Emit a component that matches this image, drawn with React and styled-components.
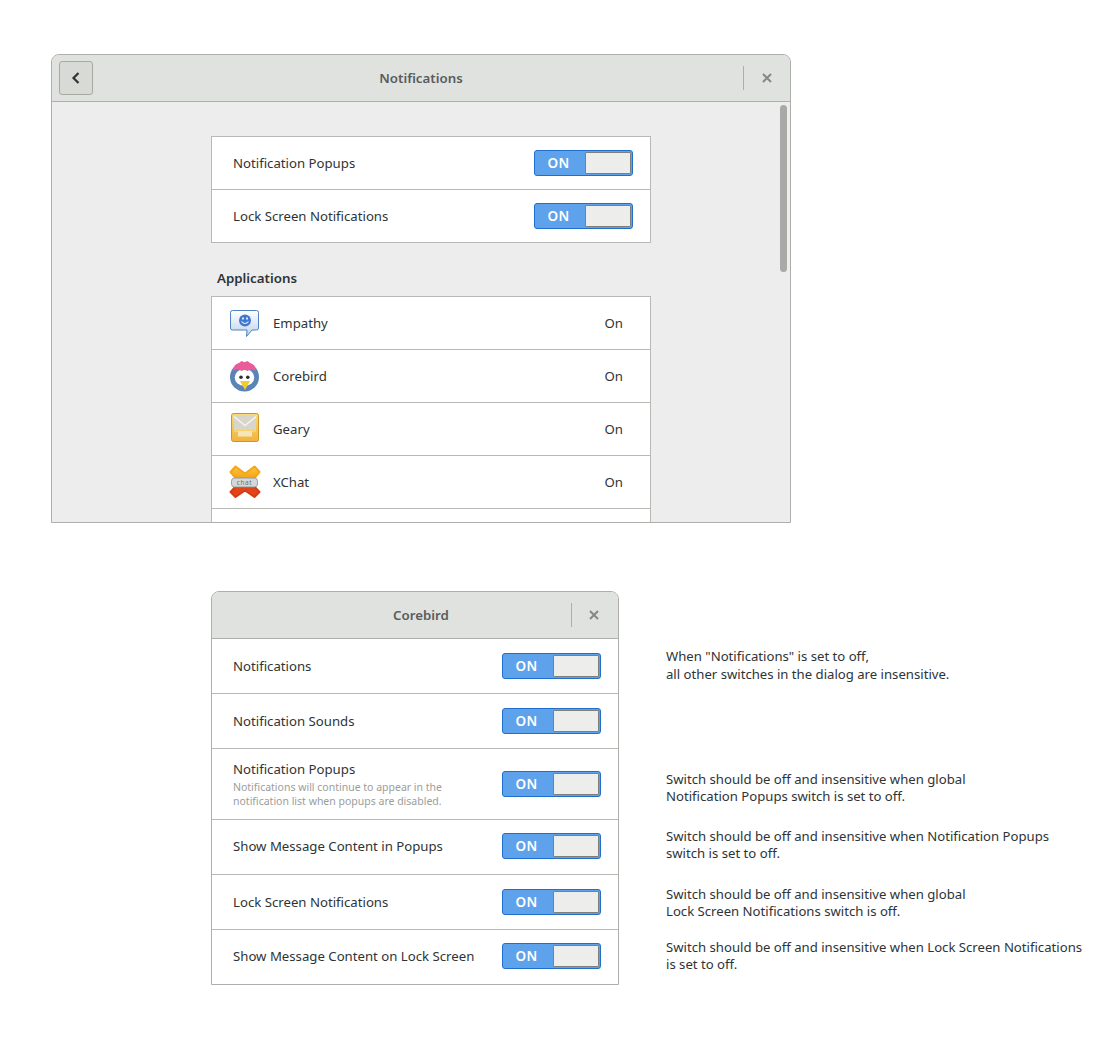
import styled, { createGlobalStyle } from "styled-components";

const GlobalStyle = createGlobalStyle`
  html, body {
    margin: 0;
    background: #fff;
    font-family: "Noto Sans", "Open Sans", sans-serif;
    color: #2e3436;
  }
`;

const Page = styled.div`
  width: 1120px;
  height: 1060px;
  box-sizing: border-box;
  padding: 54px 0 0 51px;
  display: flex;
  flex-direction: column;
  gap: 68px;
`;

const Window = styled.section`
  position: relative;
  box-sizing: border-box;
  width: 740px;
  height: 469px;
  display: flex;
  flex-direction: column;
  border: 1px solid #aeaeaa;
  border-radius: 8px 8px 0 0;
  overflow: hidden;
  background: #ededed;
`;

const Header = styled.header`
  position: relative;
  flex: none;
  box-sizing: border-box;
  height: 47px;
  display: flex;
  align-items: center;
  padding: 0 7px;
  background: #e0e2df;
  border-bottom: 1px solid #aeaeaa;
`;

const Title = styled.h1`
  position: absolute;
  left: ${(p) => p.$shift || 0}px;
  right: 0;
  margin: 0;
  text-align: center;
  font-size: 13.3px;
  font-weight: 600;
  color: #585c5c;
`;

const BackButton = styled.button`
  position: relative;
  width: 34px;
  height: 34px;
  padding: 0;
  display: flex;
  align-items: center;
  justify-content: center;
  background: #d8dad5;
  border: 1px solid #a7a9a3;
  border-radius: 3px;
`;

const HeaderEnd = styled.div`
  position: relative;
  margin-left: auto;
  display: flex;
  align-items: center;
  height: 24px;
  padding-left: ${(p) => p.$left}px;
  padding-right: ${(p) => p.$right}px;
  border-left: 1px solid #aeaeaa;
`;

const Close = () => (
  <svg width="10" height="10" viewBox="0 0 10 10">
    <path d="M1 1 L9 9 M9 1 L1 9" stroke="#858784" strokeWidth="2" fill="none" />
  </svg>
);

const Body = styled.div`
  flex: 1;
  min-height: 0;
  overflow: hidden;
  padding: 34px 0 0 159px;
`;

const Scrollbar = styled.div`
  position: absolute;
  top: 50px;
  right: 3px;
  width: 7px;
  height: 167px;
  border-radius: 4px;
  background: #a9aaa8;
`;

const List = styled.div`
  box-sizing: border-box;
  width: 440px;
  background: #fff;
  border: 1px solid #b8b8b4;
`;

const Row = styled.div`
  box-sizing: border-box;
  height: 53px;
  display: flex;
  align-items: center;
  padding: 0 17px 0 21px;
  border-top: 1px solid #b8b8b4;
  font-size: 13.2px;
  &:first-child {
    height: 52px;
    border-top: 0;
  }
`;

const AppRow = styled(Row)`
  padding: 0 27px 0 16px;
  gap: 12px;
`;

const AppIcon = styled.svg`
  flex: none;
  width: 33px;
  height: 36px;
`;

const Status = styled.span`
  margin-left: auto;
`;

const SectionTitle = styled.h2`
  margin: 25px 0 8px 6px;
  font-size: 13.3px;
  line-height: 20px;
  font-weight: 600;
  color: #2e3436;
`;

const SwitchTrack = styled.div`
  flex: none;
  margin-left: auto;
  box-sizing: border-box;
  width: 99px;
  height: 26px;
  display: flex;
  align-items: stretch;
  padding: 1px;
  background: #5fa2ec;
  border: 1px solid #1f6fcf;
  border-radius: 3px;
`;

const SwitchLabel = styled.span`
  flex: 1;
  display: flex;
  align-items: center;
  justify-content: center;
  padding-right: 4px;
  color: #fff;
  font-size: 13.5px;
  font-weight: 600;
  letter-spacing: 0.4px;
`;

const SwitchHandle = styled.span`
  box-sizing: border-box;
  width: 46px;
  background: #ededeb;
  border: 1px solid #7f7f7c;
  border-radius: 1px;
`;

const Switch = () => (
  <SwitchTrack>
    <SwitchLabel>ON</SwitchLabel>
    <SwitchHandle />
  </SwitchTrack>
);

const Lower = styled.div`
  display: flex;
  margin-left: 160px;
`;

const Dialog = styled.section`
  box-sizing: border-box;
  flex: none;
  width: 408px;
  height: 394px;
  border: 1px solid #aeaeaa;
  border-radius: 8px 8px 0 0;
  overflow: hidden;
  background: #fff;
`;

const DialogRow = styled.div`
  box-sizing: border-box;
  height: ${(p) => p.$height}px;
  display: flex;
  align-items: center;
  padding: 0 17px ${(p) => p.$lift || 0}px 21px;
  border-top: ${(p) => (p.$first ? "0" : "1px solid #b8b8b4")};
  font-size: 13.2px;
`;

const RowText = styled.div`
  display: flex;
  flex-direction: column;
`;

const Hint = styled.span`
  margin-top: 2px;
  font-size: 10.5px;
  line-height: 14px;
  color: #9b9d9b;
`;

const Notes = styled.div`
  margin-left: 47px;
  padding-top: 56px;
  display: flex;
  flex-direction: column;
`;

const Note = styled.p`
  margin: ${(p) => p.$top}px 0 0;
  font-size: 13.15px;
  line-height: ${(p) => p.$leading}px;
  color: #2e3436;
  white-space: pre-line;
`;

const BackIcon = () => (
  <svg width="10" height="14" viewBox="0 0 10 14">
    <path d="M7.5 2 L2.5 7 L7.5 12" stroke="#2e3436" strokeWidth="2.2" fill="none" />
  </svg>
);

const EmpathyIcon = () => (
  <AppIcon viewBox="0 0 33 36">
    <defs>
      <linearGradient id="emp" x1="0" y1="0" x2="0" y2="1">
        <stop offset="0" stopColor="#ffffff" />
        <stop offset="1" stopColor="#bfd2ea" />
      </linearGradient>
    </defs>
    <path d="M4.5 5.5 H28.5 Q30.5 5.5 30.5 7.5 V23 Q30.5 25 28.5 25 H24 L18.5 31.5 L19 25 H4.5 Q2.5 25 2.5 23 V7.5 Q2.5 5.5 4.5 5.5 Z" fill="url(#emp)" stroke="#4f83c1" strokeWidth="1" />
    <circle cx="17" cy="15.5" r="6" fill="#3f78cd" />
    <ellipse cx="15" cy="13.5" rx="0.9" ry="1.3" fill="#e8f0fb" />
    <ellipse cx="19" cy="13.5" rx="0.9" ry="1.3" fill="#e8f0fb" />
    <path d="M13.5 16.5 Q17 20.5 20.5 16.5" stroke="#e8f0fb" strokeWidth="1.1" fill="none" />
  </AppIcon>
);

const CorebirdIcon = () => (
  <AppIcon viewBox="0 0 33 36">
    <circle cx="16.5" cy="19" r="14.5" fill="#5a84b5" />
    <ellipse cx="16.5" cy="19.5" rx="9.8" ry="8.5" fill="#fff" />
    <path d="M5 13 Q5.5 6 11 5 L13.5 3 L16.5 4.2 L19.5 3 L22 5 Q27.5 6 28 13 Q23 10 19.5 13 Q16.5 11 13.5 13 Q10 10 5 13 Z" fill="#ea5c97" />
    <circle cx="13" cy="19.3" r="1.8" fill="#2b3036" />
    <circle cx="19.8" cy="19.3" r="1.8" fill="#2b3036" />
    <path d="M12 23 H22 L17 32 Z" fill="#f2cb2f" />
  </AppIcon>
);

const GearyIcon = () => (
  <AppIcon viewBox="0 0 33 36">
    <defs>
      <linearGradient id="gea" x1="0" y1="0" x2="0" y2="1">
        <stop offset="0" stopColor="#f7dc7a" />
        <stop offset="1" stopColor="#f2b33c" />
      </linearGradient>
    </defs>
    <rect x="3.5" y="2.5" width="27" height="28" rx="2" fill="url(#gea)" stroke="#cf9426" />
    <rect x="6" y="5" width="22" height="15" fill="#d8d6cb" />
    <path d="M6 5.5 L17 14.5 L28 5.5" stroke="#f5f4ee" strokeWidth="1.6" fill="none" />
    <path d="M6 19 H28 V21 H6 Z" fill="#f8d26b" />
    <rect x="10" y="20" width="14" height="5.5" fill="#f5e6b8" />
  </AppIcon>
);

const XChatIcon = () => (
  <AppIcon viewBox="0 0 33 36">
    <defs>
      <linearGradient id="xtop" x1="0" y1="0" x2="0" y2="1">
        <stop offset="0" stopColor="#fcc53a" />
        <stop offset="1" stopColor="#f39a12" />
      </linearGradient>
    </defs>
    <path d="M2.5 8 L7.5 2.5 L17 9.5 L26.5 2.5 L31.5 8 L24 17 H10 Z" fill="url(#xtop)" stroke="#f2a61c" strokeWidth="2" strokeLinejoin="round" />
    <path d="M10 20 H24 L31.5 28 L26.5 33 L17 26.5 L7.5 33 L2.5 28 Z" fill="#e2441a" stroke="#d63c14" strokeWidth="2" strokeLinejoin="round" />
    <rect x="3.5" y="14" width="26" height="9" rx="3" fill="#d4d8d8" stroke="#8d9090" strokeWidth="0.8" />
    <text x="16.5" y="21" textAnchor="middle" fontSize="6.5" fill="#6b6f6f" letterSpacing="0.6">chat</text>
  </AppIcon>
);

const apps = [
  { name: "Empathy", Icon: EmpathyIcon },
  { name: "Corebird", Icon: CorebirdIcon },
  { name: "Geary", Icon: GearyIcon },
  { name: "XChat", Icon: XChatIcon },
];

const notes = [
  { top: 0, leading: 18, text: 'When "Notifications" is set to off,\nall other switches in the dialog are insensitive.' },
  { top: 88, leading: 17, text: "Switch should be off and insensitive when global\nNotification Popups switch is set to off." },
  { top: 23, leading: 17, text: "Switch should be off and insensitive when Notification Popups\nswitch is set to off." },
  { top: 24, leading: 17, text: "Switch should be off and insensitive when global\nLock Screen Notifications switch is off." },
  { top: 19, leading: 17, text: "Switch should be off and insensitive when Lock Screen Notifications\nis set to off." },
];

const App = () => {
  return (
    <Page>
      <GlobalStyle />
      <Window>
        <Header>
          <Title>Notifications</Title>
          <BackButton>
            <BackIcon />
          </BackButton>
          <HeaderEnd $left={18} $right={11}>
            <Close />
          </HeaderEnd>
        </Header>
        <Body>
          <List>
            <Row>
              Notification Popups
              <Switch />
            </Row>
            <Row>
              Lock Screen Notifications
              <Switch />
            </Row>
          </List>
          <SectionTitle>Applications</SectionTitle>
          <List>
            {apps.map(({ name, Icon }) => (
              <AppRow key={name}>
                <Icon />
                {name}
                <Status>On</Status>
              </AppRow>
            ))}
            <AppRow />
          </List>
        </Body>
        <Scrollbar />
      </Window>
      <Lower>
        <Dialog>
          <Header>
            <Title $shift={12}>Corebird</Title>
            <HeaderEnd $left={17} $right={12}>
              <Close />
            </HeaderEnd>
          </Header>
          <DialogRow $first $height={54}>
            Notifications
            <Switch />
          </DialogRow>
          <DialogRow $height={55}>
            Notification Sounds
            <Switch />
          </DialogRow>
          <DialogRow $height={71}>
            <RowText>
              Notification Popups
              <Hint>
                Notifications will continue to appear in the
                <br />
                notification list when popups are disabled.
              </Hint>
            </RowText>
            <Switch />
          </DialogRow>
          <DialogRow $height={55} $lift={2}>
            Show Message Content in Popups
            <Switch />
          </DialogRow>
          <DialogRow $height={55}>
            Lock Screen Notifications
            <Switch />
          </DialogRow>
          <DialogRow $height={55} $lift={2}>
            Show Message Content on Lock Screen
            <Switch />
          </DialogRow>
        </Dialog>
        <Notes>
          {notes.map((note) => (
            <Note key={note.text} $top={note.top} $leading={note.leading}>
              {note.text}
            </Note>
          ))}
        </Notes>
      </Lower>
    </Page>
  );
};

export default App;
